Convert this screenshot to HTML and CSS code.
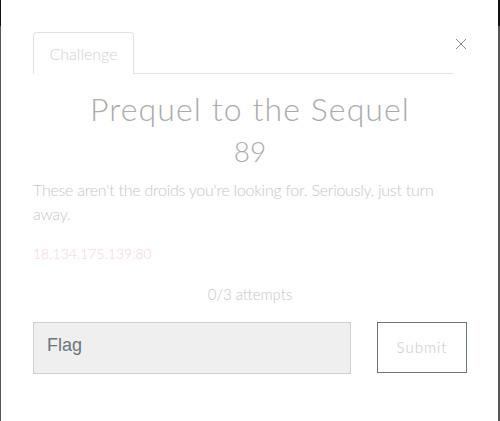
FILE: index.html
```html
<!DOCTYPE html>
<html>
<head>
<meta charset="utf-8">
<link rel="stylesheet" href="styles.css">
</head>
<body>
<div class="modal">
  <div class="header">
    <div class="nav">
      <div class="tab">Challenge</div>
    </div>
    <button class="close" aria-label="Close">
      <svg width="12" height="12" viewBox="0 0 12 12"><path d="M1 1L11 11M11 1L1 11" stroke="#8a8a8a" stroke-width="1" fill="none"/></svg>
    </button>
  </div>
  <h2 class="title">Prequel to the Sequel</h2>
  <h3 class="value">89</h3>
  <p class="desc">These aren't the droids you're looking for. Seriously, just turn away.</p>
  <p class="ip">18.134.175.139:80</p>
  <p class="attempts">0/3 attempts</p>
  <form class="form">
    <input class="flag" type="text" placeholder="Flag">
    <button class="submit" type="button">Submit</button>
  </form>
</div>
</body>
</html>
```
FILE: styles.css
```css
html, body {
  margin: 0;
  padding: 0;
  height: 100%;
}
body {
  background: linear-gradient(#111 0 26px, #555 26px);
  font-family: Lato, "Noto Sans", sans-serif;
  font-weight: 300;
  overflow: hidden;
}
.modal {
  margin: 0 2px 0 1px;
  height: 421px;
  background: #fff;
  box-sizing: border-box;
  padding: 32px 31px 0 32px;
}
.header {
  display: flex;
  align-items: flex-start;
}
.nav {
  width: 420px;
  height: 41px;
  border-bottom: 1px solid #dee2e6;
  display: flex;
}
.tab {
  box-sizing: border-box;
  width: 101px;
  height: 42px;
  border: 1px solid #dee2e6;
  border-bottom-color: #fff;
  border-radius: 4px 4px 0 0;
  background: #fff;
  color: #d0d0d0;
  font-size: 16px;
  display: flex;
  align-items: center;
  justify-content: center;
}
.close {
  margin-left: 2px;
  margin-top: 6px;
  width: 12px;
  height: 12px;
  padding: 0;
  border: 0;
  background: none;
  display: flex;
}
.title {
  margin: 16px 0 0;
  text-align: center;
  font-size: 32px;
  font-weight: 300;
  line-height: 1.2;
  letter-spacing: 1.1px;
  color: #ababab;
}
.value {
  margin: 5px 0 0;
  text-align: center;
  font-size: 28px;
  font-weight: 300;
  line-height: 1.3;
  color: #ababab;
}
.desc {
  margin: 8px 0 0;
  font-size: 16px;
  letter-spacing: -0.25px;
  line-height: 24px;
  color: #c6c6c6;
}
.ip {
  margin: 16px 0 0;
  font-size: 14px;
  line-height: 24px;
  color: #fad0df;
}
.attempts {
  margin: 16px 0 0;
  text-align: center;
  font-size: 15px;
  line-height: 24px;
  color: #c6c6c6;
}
.form {
  margin: 16px 0 0;
  display: flex;
  align-items: flex-start;
  gap: 26px;
}
.flag {
  box-sizing: border-box;
  width: 318px;
  height: 52px;
  background: #efefef;
  border: 1px solid #ccd0d6;
  padding: 0 13px 4px;
  font-family: "Liberation Sans", Arial, sans-serif;
  font-size: 18px;
  color: #6c757d;
  outline: none;
}
.flag::placeholder {
  color: #6c757d;
}
.submit {
  box-sizing: border-box;
  width: 90px;
  height: 51px;
  background: #fff;
  border: 1px solid #6c757d;
  font-family: inherit;
  font-weight: 300;
  font-size: 15px;
  letter-spacing: 1px;
  color: #c8c8c8;
  padding: 0;
}
```
